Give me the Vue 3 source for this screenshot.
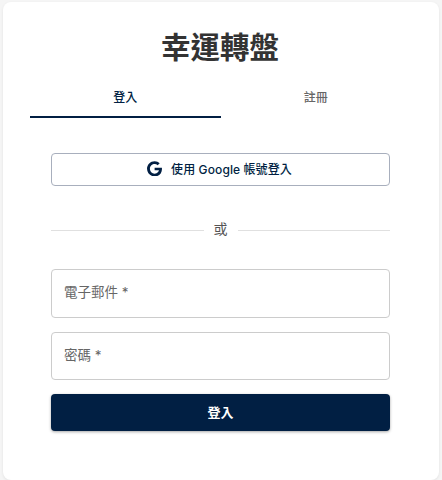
<template>
  <div class="page">
    <div class="card">
      <h1 class="title">幸運轉盤</h1>
      <div class="tabs">
        <button
          v-for="tab in tabs"
          :key="tab"
          class="tab"
          :class="{ active: tab === activeTab }"
          @click="activeTab = tab"
        >
          {{ tab }}
        </button>
      </div>
      <form class="form" @submit.prevent>
        <button type="button" class="btn-google">
          <svg class="g-icon" viewBox="0 0 488 512" width="15" height="15.7">
            <path d="M488 261.8C488 403.3 391.1 504 248 504 110.8 504 0 393.2 0 256S110.8 8 248 8c66.8 0 123 24.5 166.3 64.9l-67.5 64.9C258.5 52.6 94.3 116.6 94.3 256c0 86.5 69.1 156.6 153.7 156.6 98.2 0 135-70.4 140.8-106.9H248v-85.3h236.1c2.3 12.7 3.9 24.9 3.9 41.4z" />
          </svg>
          <span>使用 Google 帳號登入</span>
        </button>
        <div class="divider"><span>或</span></div>
        <label class="field">
          <input type="email" placeholder="電子郵件 *" />
        </label>
        <label class="field">
          <input type="password" placeholder="密碼 *" />
        </label>
        <button type="submit" class="btn-submit">登入</button>
      </form>
    </div>
  </div>
</template>

<script setup>
import { ref } from 'vue'

const tabs = ['登入', '註冊']
const activeTab = ref('登入')
</script>

<style scoped>
.page {
  padding: 2px 3.5px 0 3px;
  box-sizing: border-box;
  height: 480px;
  overflow: hidden;
  background: #f5f5f5;
  font-family: Inter, "Noto Sans CJK TC", sans-serif;
}

.card {
  height: 478px;
  padding: 26px 27.5px 0 27px;
  box-sizing: border-box;
  background: #fff;
  border-radius: 8px;
  box-shadow: 0 1px 3px rgba(0, 0, 0, 0.08);
}

.title {
  margin: 0;
  padding-right: 1px;
  font-size: 29.5px;
  line-height: 38px;
  font-weight: 700;
  text-align: center;
  color: #333;
}

.tabs {
  display: flex;
  margin-top: 10px;
}

.tab {
  flex: 1;
  height: 42px;
  padding: 0;
  border: 0;
  border-bottom: 2px solid transparent;
  background: none;
  font: inherit;
  font-size: 12px;
  font-weight: 500;
  color: #666;
  cursor: pointer;
}

.tab.active {
  color: #011f43;
  border-bottom-color: #011f43;
}

.form {
  display: flex;
  flex-direction: column;
  padding: 35px 21px 0;
}

.btn-google {
  display: flex;
  align-items: center;
  justify-content: center;
  gap: 9px;
  height: 33px;
  padding: 0 2px 2px 0;
  background: #fff;
  border: 1px solid #a8afbd;
  border-radius: 4px;
  font: inherit;
  font-size: 12px;
  letter-spacing: 0.1px;
  font-weight: 500;
  color: #011f43;
  cursor: pointer;
}

.g-icon {
  fill: #011f43;
}

.divider {
  display: flex;
  align-items: center;
  gap: 10px;
  margin: 35px 0 30px;
  font-size: 14px;
  line-height: 18px;
  color: #555;
}

.divider span {
  position: relative;
  top: -1px;
}

.divider::before,
.divider::after {
  content: "";
  flex: 1;
  height: 1px;
  background: #e0e0e0;
}

.field {
  display: block;
  margin-bottom: 14px;
}

.field input {
  display: block;
  width: 100%;
  height: 48.5px;
  padding: 0 12px 2px;
  box-sizing: border-box;
  background: #fff;
  border: 1px solid #ccc;
  border-radius: 4px;
  font: inherit;
  font-size: 13.5px;
  color: #333;
  outline: none;
}

.field input::placeholder {
  color: #666;
  opacity: 1;
}

.btn-submit {
  height: 37px;
  padding: 0 0 2px;
  background: #011f43;
  border: 0;
  border-radius: 4px;
  box-shadow: 0 1px 3px rgba(0, 0, 0, 0.35);
  font: inherit;
  font-size: 13px;
  font-weight: 700;
  color: #fff;
  cursor: pointer;
}
</style>

<style>
html,
body {
  background: #f5f5f5;
}
</style>
